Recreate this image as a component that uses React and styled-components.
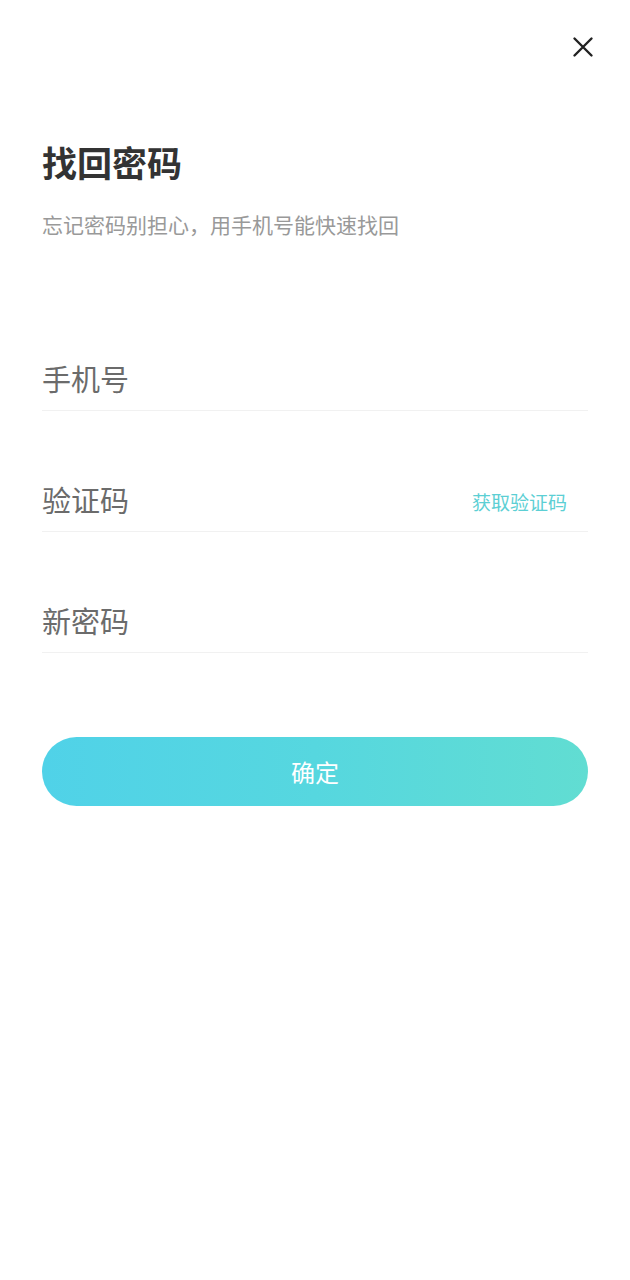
import React from "react";
import styled, { createGlobalStyle } from "styled-components";

const GlobalStyle = createGlobalStyle`
  html, body {
    margin: 0;
    padding: 0;
    background: #ffffff;
  }
  body {
    font-family: "Noto Sans CJK SC", "Noto Sans", sans-serif;
  }
  * { box-sizing: border-box; }
`;

const Page = styled.div`
  width: 630px;
  min-height: 1280px;
  background: #ffffff;
  padding: 0 42px;
  display: flex;
  flex-direction: column;
`;

const TopBar = styled.div`
  display: flex;
  justify-content: flex-end;
  padding-top: 36px;
  margin-right: -6px;
`;

const CloseButton = styled.button`
  width: 22px;
  height: 22px;
  padding: 0;
  border: none;
  background: transparent;
  display: flex;
  align-items: center;
  justify-content: center;
  cursor: pointer;
`;

const Title = styled.h1`
  margin: 84px 0 0;
  font-size: 35px;
  line-height: 40px;
  font-weight: 700;
  color: #333333;
`;

const Subtitle = styled.p`
  margin: 28px 0 0;
  font-size: 21px;
  line-height: 28px;
  color: #999999;
`;

const Form = styled.div`
  margin-top: 52px;
  display: flex;
  flex-direction: column;
`;

const Field = styled.div`
  margin-top: 58px;
  height: 63px;
  display: flex;
  align-items: center;
  border-bottom: 1px solid #f1f1f1;
  padding-bottom: 3px;
`;

const Input = styled.input`
  flex: 1;
  min-width: 0;
  border: none;
  outline: none;
  background: transparent;
  padding: 0;
  font-family: inherit;
  font-size: 29px;
  line-height: 34px;
  color: #333333;
  &::placeholder {
    color: #6b6b6b;
  }
`;

const CodeLink = styled.span`
  font-size: 19px;
  line-height: 26px;
  color: #5ccfd4;
  margin-right: 21px;
  margin-top: 6px;
  white-space: nowrap;
`;

const Submit = styled.button`
  margin-top: 84px;
  height: 69px;
  width: 100%;
  border: none;
  border-radius: 35px;
  background: linear-gradient(90deg, #50d2e8 0%, #56d7df 50%, #61ddd2 100%);
  color: #ffffff;
  font-family: inherit;
  font-size: 24px;
  line-height: 30px;
  cursor: pointer;
`;

function CloseIcon() {
  return (
    <svg width="22" height="22" viewBox="0 0 22 22" fill="none">
      <path d="M2.5 2.5L19.5 19.5M19.5 2.5L2.5 19.5" stroke="#222222" strokeWidth="2.4" strokeLinecap="round" />
    </svg>
  );
}

export default function App() {
  return (
    <>
      <GlobalStyle />
      <Page>
        <TopBar>
          <CloseButton aria-label="关闭">
            <CloseIcon />
          </CloseButton>
        </TopBar>
        <Title>找回密码</Title>
        <Subtitle>忘记密码别担心，用手机号能快速找回</Subtitle>
        <Form>
          <Field>
            <Input placeholder="手机号" />
          </Field>
          <Field>
            <Input placeholder="验证码" />
            <CodeLink>获取验证码</CodeLink>
          </Field>
          <Field>
            <Input placeholder="新密码" type="password" />
          </Field>
          <Submit>确定</Submit>
        </Form>
      </Page>
    </>
  );
}
